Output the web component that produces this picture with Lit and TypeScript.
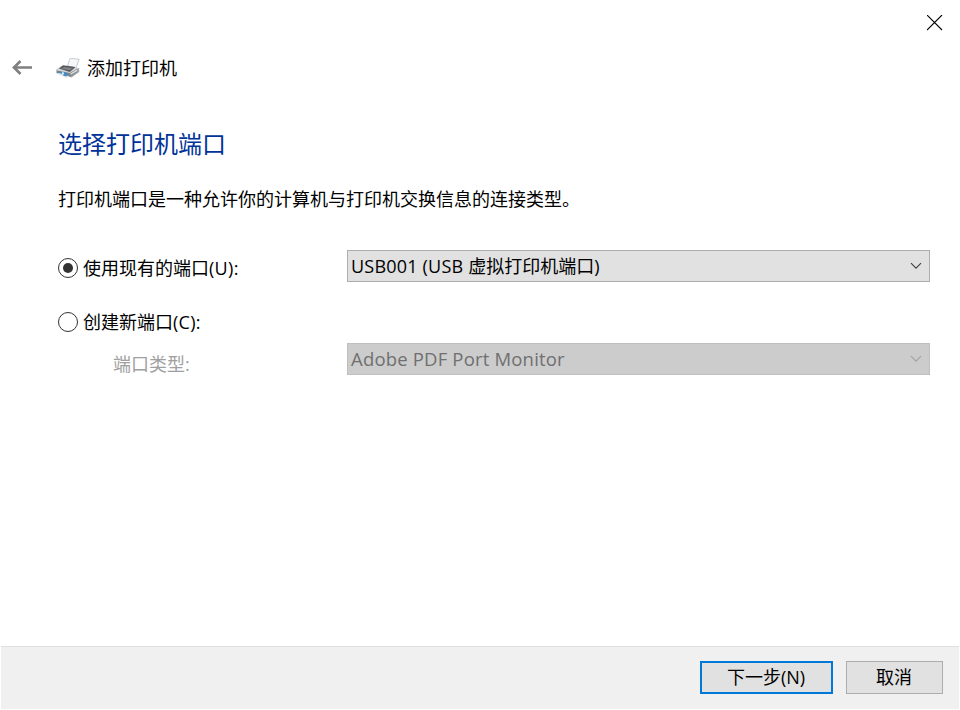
import { LitElement, html, css, svg } from "lit";
import { customElement, state } from "lit/decorators.js";

const chevron = svg`<path d="M1 1.2 6 6.2 11 1.2" fill="none" stroke="currentColor" stroke-width="1.2"/>`;

@customElement("app-root")
export class AppRoot extends LitElement {
  @state() private mode = "existing";

  static styles = css`
    :host {
      display: flex;
      flex-direction: column;
      box-sizing: border-box;
      width: 960px;
      height: 710px;
      padding: 0 1px 1px;
      background: #fff;
      color: #000;
      font: 18px/24px "Open Sans", "Noto Sans CJK SC", sans-serif;
      white-space: nowrap;
      overflow: hidden;
    }
    svg { display: block; flex: none; }
    .titlebar { display: flex; justify-content: flex-end; height: 45px; padding: 15px 16px 0 0; box-sizing: border-box; }
    .header { display: flex; align-items: center; height: 46px; padding-left: 11px; }
    .printer { margin: 0 7px 0 22px; }
    .body { flex: 1; padding: 0 29px 0 57px; }
    h1 { margin: 36px 0 0; font-size: 24px; line-height: 34px; font-weight: 400; color: #003399; }
    .intro { margin: 26px 0 0; }
    .row { display: grid; grid-template-columns: 289px 1fr; align-items: center; height: 32px; }
    .first { margin-top: 39px; }
    .second { margin-top: 24px; }
    .third { margin-top: 4px; }
    .option { display: flex; align-items: center; gap: 5px; padding-top: 4px; }
    .second .option { padding-top: 0; }
    .radio { box-sizing: border-box; width: 20px; height: 20px; border: 1.4px solid #333; border-radius: 50%; background: #fff; display: grid; place-items: center; }
    .dot { width: 10px; height: 10px; border-radius: 50%; background: #333; }
    .type { padding: 10px 0 0 55px; color: #a0a0a0; }
    .select { box-sizing: border-box; height: 32px; border: 1px solid #adadad; background: #e1e1e1; display: flex; align-items: center; justify-content: space-between; padding: 0 7px 0 3px; color: #000; }
    .select svg { color: #444; }
    .disabled { background: #ccc; border-color: #bfbfbf; color: #707070; }
    .disabled svg { color: #a3a3a3; }
    .key { letter-spacing: 0.3px; }
    .port { letter-spacing: 0.2px; }
    .adobe { font-size: 18.5px; letter-spacing: 0.18px; }
    .footer { box-sizing: border-box; height: 63px; border-top: 1px solid #dfdfdf; background: #f0f0f0; display: flex; justify-content: flex-end; align-items: flex-start; gap: 13px; padding: 14px 16px 0 0; }
    .button { box-sizing: border-box; height: 33px; width: 97px; border: 1px solid #adadad; background: #e1e1e1; display: flex; align-items: center; justify-content: center; padding: 0 1px 2px 0; }
    .primary { width: 133px; border: 2px solid #0078d7; }
  `;

  private radio(value: string, label: string, key: string) {
    return html`<div class="option" @click=${() => (this.mode = value)}>
      <div class="radio">${this.mode === value ? html`<div class="dot"></div>` : ""}</div>
      <div>${label}<span class="key">${key}</span></div>
    </div>`;
  }

  render() {
    return html`
      <div class="titlebar">
        <svg width="16" height="16" viewBox="0 0 16 16"><path d="M0 0 15 15M15 0 0 15" stroke="#000" stroke-width="1.1"/></svg>
      </div>
      <div class="header">
        <svg width="21" height="16" viewBox="0 0 21 16"><path d="M20 7.500H2M8.500 1 2 7.500 8.500 14" fill="none" stroke="#808080" stroke-width="2.700"/></svg>
        <svg class="printer" width="25" height="20" viewBox="0 0 24 20">
          <path d="M12 8 14.500.3 23.700 1.200 20.500 10z" fill="#f5f7f8" stroke="#b5babc" stroke-width=".7"/>
          <path d="M20.500 10 23.700 10v4L16 19.500l-3-1z" fill="#a3a6a8"/>
          <path d="M.3 11.500 5 8.300l16 1.400 2.500 1.300-8.200 5L.6 13z" fill="#d0d3d4"/>
          <path d="M3.500 10.500 7.500 7.200 20 9l-5.700 4.900z" fill="#56595b"/>
          <path d="M6 10.700 8.500 9l8.700 1-3 2.300z" fill="#818486"/>
          <path d="M1 12.500 14.500 15l7.500-4.300v3L15 18.500 1 15.300z" fill="#7d8285"/>
          <path d="M3.500 13.500 12 15.200v3l-8.500-2z" fill="#348bd0"/>
          <path d="M6.500 14v2.500l2 .5v-2.500z" fill="#cce6ee"/>
          <path d="M.5 15.500 4 15l9.500 3.300-2 1.500z" fill="#dfe3e5"/>
          <path d="M8 16.200l3.500.9-.8 1.300-3.200-.8z" fill="#3d8bc9"/>
          <path d="m15 16.300 6.500-3.900" stroke="#e5e7e8" stroke-width="1.300"/>
        </svg>
        <div>添加打印机</div>
      </div>
      <div class="body">
        <h1>选择打印机端口</h1>
        <p class="intro">打印机端口是一种允许你的计算机与打印机交换信息的连接类型。</p>
        <div class="row first">
          ${this.radio("existing", "使用现有的端口", "(U):")}
          <div class="select"><div><span class="port">USB001 (USB </span>虚拟打印机端口)</div><svg width="12" height="8" viewBox="0 0 12 8">${chevron}</svg></div>
        </div>
        <div class="row second">${this.radio("new", "创建新端口", "(C):")}</div>
        <div class="row third">
          <div class="type">端口类型:</div>
          <div class="select disabled"><div class="adobe">Adobe PDF Port Monitor</div><svg width="12" height="8" viewBox="0 0 12 8">${chevron}</svg></div>
        </div>
      </div>
      <div class="footer">
        <div class="button primary">下一步(N)</div>
        <div class="button">取消</div>
      </div>
    `;
  }
}
